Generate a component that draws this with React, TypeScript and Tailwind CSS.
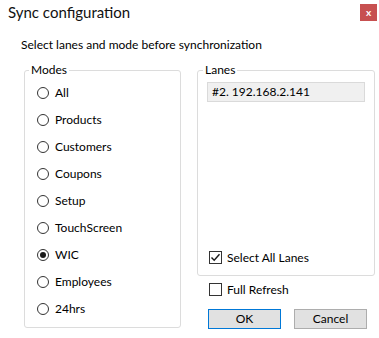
import { useState } from "react";

const modes = ["All", "Products", "Customers", "Coupons", "Setup", "TouchScreen", "WIC", "Employees", "24hrs"];

function Radio({ checked }: { checked: boolean }) {
  return (
    <span className="flex items-center justify-center w-[12px] h-[12px] rounded-full border border-[#333333] bg-white shrink-0">
      {checked && <span className="w-[6px] h-[6px] rounded-full bg-[#1a1a1a]" />}
    </span>
  );
}

function Checkbox({ checked }: { checked: boolean }) {
  return (
    <span className="flex items-center justify-center w-[13px] h-[13px] border border-[#333333] bg-white shrink-0">
      {checked && (
        <svg viewBox="0 0 11 11" className="w-[11px] h-[11px]">
          <path d="M1.5 5.5 L4.2 8.3 L9.5 2.2" fill="none" stroke="#1a1a1a" strokeWidth="1.4" />
        </svg>
      )}
    </span>
  );
}

export default function App() {
  const [mode, setMode] = useState("WIC");
  const [allLanes, setAllLanes] = useState(true);
  const [fullRefresh, setFullRefresh] = useState(false);

  return (
    <div className="w-[379px] h-[338px] bg-white text-black text-[12px] font-['Lato',sans-serif] overflow-hidden">
      {/* Title bar */}
      <div className="flex items-start justify-between h-[25px]">
        <div className="pl-[8px] pt-[2px] text-[15px] leading-[20px] text-[#111]">Sync configuration</div>
        <button className="mt-[4px] mr-[2px] w-[17px] h-[17px] bg-[#c75050] text-white text-[10px] leading-[17px] font-bold flex items-center justify-center">
          x
        </button>
      </div>

      <p className="mt-[12px] pl-[21px] leading-[16px]">Select lanes and mode before synchronization</p>

      <div className="flex mt-[9px]">
        {/* Modes */}
        <fieldset className="ml-[24px] w-[157px] h-[266px] border border-[#dcdcdc] rounded-[3px]">
          <legend className="ml-[4px] px-[2px] leading-[16px]">Modes</legend>
          <div className="flex flex-col pt-[1px]">
            {modes.map((m) => (
              <label key={m} className="flex items-center h-[27px] pl-[12px] gap-[6px] cursor-default" onClick={() => setMode(m)}>
                <Radio checked={mode === m} />
                <span>{m}</span>
              </label>
            ))}
          </div>
        </fieldset>

        {/* Lanes */}
        <div className="ml-[16px] w-[178px] flex flex-col">
          <fieldset className="h-[214px] border border-[#dcdcdc] rounded-[3px]">
            <legend className="ml-[5px] px-[2px] leading-[16px]">Lanes</legend>
            <div className="h-[197px] flex flex-col">
              <div className="mt-[4px] ml-[9px] w-[158px] h-[20px] bg-[#f0f0f0] border border-[#dadada] pl-[4px] flex items-center">
                #2. 192.168.2.141
              </div>
              <label className="mt-auto mb-[11px] ml-[11px] flex items-center gap-[5px] leading-[13px]" onClick={() => setAllLanes(!allLanes)}>
                <Checkbox checked={allLanes} />
                <span>Select All Lanes</span>
              </label>
            </div>
          </fieldset>

          <label className="mt-[7px] ml-[12px] flex items-center gap-[5px] leading-[13px]" onClick={() => setFullRefresh(!fullRefresh)}>
            <Checkbox checked={fullRefresh} />
            <span>Full Refresh</span>
          </label>

          <div className="mt-[13px] ml-[11px] flex gap-[13px]">
            <button className="w-[73px] h-[20px] bg-[#e1e1e1] border border-[#0078d7] leading-[18px]">OK</button>
            <button className="w-[73px] h-[20px] bg-[#e1e1e1] border border-[#adadad] leading-[18px]">Cancel</button>
          </div>
        </div>
      </div>
    </div>
  );
}
